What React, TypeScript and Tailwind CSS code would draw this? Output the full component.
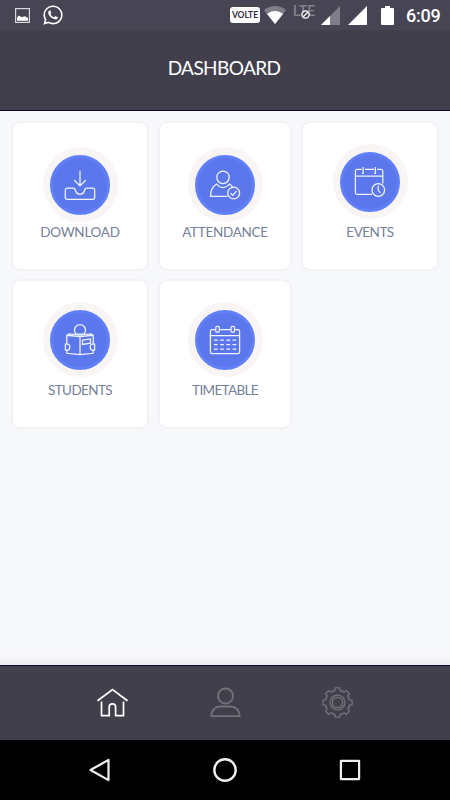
import React from "react";
import { FaWhatsapp } from "react-icons/fa";

interface MenuItem {
    label: string;
    icon: React.ReactNode;
    tracking: string;
    raised?: boolean;
}

const DownloadIcon: React.FC = () => (
    <>
        <path d="M15 .7V15.7M9.3 10.2 15 15.9l5.7-5.7" />
        <path d="M2.3 18h6c1.5 0 1.7.6 2 2 .6 2.7 2.3 4.2 4.7 4.2s4.1-1.5 4.7-4.2c.3-1.4.5-2 2-2h6a2 2 0 0 1 2 2v7.3a2 2 0 0 1-2 2H2.3a2 2 0 0 1-2-2V20a2 2 0 0 1 2-2Z" />
    </>
);

const AttendanceIcon: React.FC = () => (
    <>
        <circle cx="13" cy="7.3" r="6.2" />
        <path d="M17.6 26.3H.5c0-5.8 2.2-10 6.3-12.3 1.6 2.3 3.7 3.5 6.2 3.5s4.6-1.2 6.2-3.5c1.2.7 2.5 1.7 3.3 3" />
        <circle cx="23.7" cy="23" r="5.9" />
        <path d="m20.7 23.3 2 2 4-4.5" />
    </>
);

const EventsIcon: React.FC = () => (
    <>
        <path d="M17 27.3H2a1.6 1.6 0 0 1-1.6-1.6V4A1.6 1.6 0 0 1 2 2.4h4.8M10 2.4h9.2M22.2 2.4h4A1.6 1.6 0 0 1 27.8 4v12.5M.4 9.2h27.4" />
        <path d="M8.2 0v6.3H7M20.4 0v6.3h-1.2" />
        <circle cx="23.3" cy="23" r="6.3" />
        <path d="M23.2 18.8v4.5l2.3 2.5" />
    </>
);

const StudentsIcon: React.FC = () => (
    <>
        <path d="M11.3 9.2a5.5 5.5 0 1 1 7.4 0Z" />
        <path d="M1.8 19v-8.7L15 11.5l13.2-1.2V19M1.8 25.3v3L15 29.7l13.2-1.4v-3M15 11.5v18.2" />
        <path d="M3.5 10V9L15 10.2 26.5 9v1" />
        <path d="M.4 19h2.2c3 .8 3 5.5 0 6.2H.4ZM29.6 19h-2.2c-3 .8-3 5.5 0 6.2h2.2Z" />
        <path d="m17.5 15.2 8-1.2v4.2l-8 1.2Z" />
    </>
);

const TimetableIcon: React.FC = () => (
    <>
        <path d="M5.7 4.7H2A1.6 1.6 0 0 0 .4 6.3v20.8A1.6 1.6 0 0 0 2 28.7h26a1.6 1.6 0 0 0 1.6-1.6V6.3A1.6 1.6 0 0 0 28 4.7h-3.3M9.3 4.7h11.4M.4 10.6h29.2" />
        <rect x="5.8" y="1.4" width="3.5" height="5.8" rx="1.3" />
        <rect x="21" y="1.4" width="3.5" height="5.8" rx="1.3" />
        <path d="M4 15.2h3.7M10.2 15.2h3.7M16.4 15.2h3.7M22.6 15.2h3.7M4 19.5h3.7M10.2 19.5h3.7M16.4 19.5h3.7M22.6 19.5h3.7M4 24h3.7M10.2 24h3.7M16.4 24h3.7M22.6 24h3.7" />
    </>
);

const items: MenuItem[] = [
    { label: "DOWNLOAD", icon: <DownloadIcon />, tracking: "tracking-[-0.3px]" },
    { label: "ATTENDANCE", icon: <AttendanceIcon />, tracking: "tracking-[-0.3px]" },
    { label: "EVENTS", icon: <EventsIcon />, tracking: "tracking-[-0.5px]", raised: true },
    { label: "STUDENTS", icon: <StudentsIcon />, tracking: "tracking-[-0.6px]", raised: true },
    { label: "TIMETABLE", icon: <TimetableIcon />, tracking: "tracking-[-0.65px]", raised: true },
];

const MenuCard: React.FC<{ item: MenuItem }> = ({ item }) => (
    <button className="flex h-[150px] flex-col items-center rounded-[9px] border-2 border-[#f2f2f2] bg-white">
        <span
            className={`flex size-[75px] shrink-0 items-center justify-center rounded-full bg-[#faf5f5] ${
                item.raised ? "mt-[21px] mb-[3px]" : "mt-[24px]"
            }`}
        >
            <span className="flex size-[60px] items-center justify-center rounded-full border-[3px] border-[#6080fa] bg-[#5c77ec]">
                <svg className="size-[30px] overflow-visible" viewBox="0 0 30 30" fill="none" stroke="#f1f4ff" strokeWidth="1.25">
                    {item.icon}
                </svg>
            </span>
        </span>
        <span className={`text-[13.5px] leading-[20px] whitespace-nowrap text-[#75809a] ${item.tracking}`}>{item.label}</span>
    </button>
);

const StatusBar: React.FC = () => (
    <div className="flex h-[30px] items-center bg-[#474453] pl-[15px]">
        <svg className="size-[15px]" viewBox="0 0 15 15">
            <rect x=".6" y=".6" width="13.8" height="13.8" fill="none" stroke="#d8d7dc" strokeWidth="1.2" />
            <path d="M2 12.7V9.5l2-2 1.5 1 1.5.8 2-1 2 .5 2 1.3v2.6Z" fill="#fff" />
        </svg>
        <FaWhatsapp className="ml-3 size-[22px] text-white" />
        <div className="ml-[166px] flex h-4 w-[30px] items-center justify-center rounded-[3px] bg-white text-[8.5px] font-bold text-[#302d3c]">
            VOLTE
        </div>
        <svg className="ml-1 h-[18px] w-[22px]" viewBox="0 0 22 18">
            <path d="M0 4.2C6.5-1.4 15.5-1.4 22 4.2L11 18Z" fill="#7f7d88" />
            <path d="M3 8c5-4 11-4 16 0l-8 10Z" fill="#fff" />
        </svg>
        {/* LTE without data */}
        <div className="relative ml-[7px] h-[22px] w-[24px] font-[Roboto,sans-serif] text-[14px] leading-[15px] font-medium tracking-[-0.1px] text-[#84828c]">
            LTE
            <svg className="absolute top-[6px] left-[8px] size-[9px]" viewBox="0 0 9 9" fill="#474453" stroke="#fff" strokeWidth="1.3">
                <circle cx="4.5" cy="4.5" r="3.6" />
                <path d="m2.3 2.3 4.4 4.4" transform="rotate(90 4.5 4.5)" />
            </svg>
        </div>
        <svg className="ml-1 size-[19px]" viewBox="0 0 19 19">
            <path d="M19 0v19H0Z" fill="#7f7d88" />
            <path d="M9 10v9H0Z" fill="#fff" />
        </svg>
        <svg className="ml-[8px] size-[19px]" viewBox="0 0 19 19">
            <path d="M19 0v19H0Z" fill="#fff" />
        </svg>
        <svg className="ml-[14px] h-[19px] w-[13px]" viewBox="0 0 13 19">
            <path d="M4 0h5v2h3a1 1 0 0 1 1 1v15a1 1 0 0 1-1 1H1a1 1 0 0 1-1-1V3a1 1 0 0 1 1-1h3Z" fill="#fff" />
        </svg>
        <span className="mt-px ml-[12px] font-[Roboto,sans-serif] text-[18px] leading-none font-medium tracking-[-0.2px] text-white">6:09</span>
    </div>
);

// eight teeth, two shoulders in each gap
const gearPath = (): string => {
    const profile = [
        [-11, 12.6],
        [-9, 14.8],
        [9, 14.8],
        [11, 12.6],
        [17, 11.8],
        [22.5, 12.8],
        [28, 11.8],
    ];
    const points: string[] = [];
    for (let i = 0; i < 8; i++) {
        profile.forEach(([offset, r]) => {
            const a = ((i * 45 + offset) * Math.PI) / 180;
            points.push(`${(15.5 + r * Math.cos(a)).toFixed(2)} ${(15.5 + r * Math.sin(a)).toFixed(2)}`);
        });
    }
    return `M${points.join("L")}Z`;
};

const TabBar: React.FC = () => (
    <div className="flex h-[75px] items-center justify-center gap-[81.5px] border-t border-[#0c0838] bg-[#423f4d] pb-[1px]">
        <svg className="h-[31px] w-[31px]" viewBox="97 687 31 31" fill="none" stroke="#fff" strokeWidth="1.7">
            <path d="m97.5 700.8 15-11.3 15 11.3" />
            <path d="M101.5 701.5v14.2h7.7V707a3.2 3.2 0 0 1 6.4 0v8.7h7.9v-14.2" />
        </svg>
        <svg className="h-[31px] w-[31px]" viewBox="209.5 687 31 31" fill="none" stroke="#737277" strokeWidth="1.9">
            <circle cx="225" cy="696" r="7.5" />
            <path d="M210.9 716.1c0-6 4-9.6 9-9.6h10.2c5 0 9 3.6 9 9.6Z" />
        </svg>
        <svg className="h-[31px] w-[31px]" viewBox="0 0 31 31" fill="none" stroke="#737277" strokeWidth="1.3" strokeLinejoin="round">
            <path d={gearPath()} />
            <circle cx="15.5" cy="15.5" r="7.4" />
            <circle cx="15.5" cy="15.5" r="5.2" />
        </svg>
    </div>
);

const SystemNav: React.FC = () => (
    <div className="flex h-[60px] items-center justify-center gap-[101px] bg-black">
        <svg className="size-6" viewBox="0 0 24 24" fill="none" stroke="#efefef" strokeWidth="2.2" strokeLinejoin="round">
            <path d="M2.5 12 20.5 1.9v20.2Z" />
        </svg>
        <svg className="size-6" viewBox="0 0 24 24" fill="none" stroke="#efefef" strokeWidth="2.4">
            <circle cx="12" cy="12" r="10.7" />
        </svg>
        <svg className="size-6" viewBox="0 0 24 24" fill="none" stroke="#efefef" strokeWidth="2.2" strokeLinejoin="round">
            <rect x="2.9" y="2.9" width="18.2" height="18.2" />
        </svg>
    </div>
);

export default function App() {
    return (
        <div className="flex h-[800px] w-[450px] flex-col overflow-hidden bg-[#f7f8fc] font-[Lato,sans-serif]">
            <StatusBar />
            <header className="flex h-[81px] items-center justify-center border-b border-[#0c0838] bg-[#423f4d] pr-[2px] pb-[4px]">
                <h1 className="text-[19px] leading-[30px] tracking-[-0.6px] text-white">DASHBOARD</h1>
            </header>
            <main className="flex-1 pt-[10px] pl-[11px]">
                <div className="grid grid-cols-[138px_134px_138px] gap-x-[9px] gap-y-[8px]">
                    {items.map((item) => (
                        <MenuCard key={item.label} item={item} />
                    ))}
                </div>
            </main>
            <div className="h-[10px] bg-linear-to-b from-[#f7f8fc] to-[#ececf1]" />
            <TabBar />
            <SystemNav />
        </div>
    );
}
